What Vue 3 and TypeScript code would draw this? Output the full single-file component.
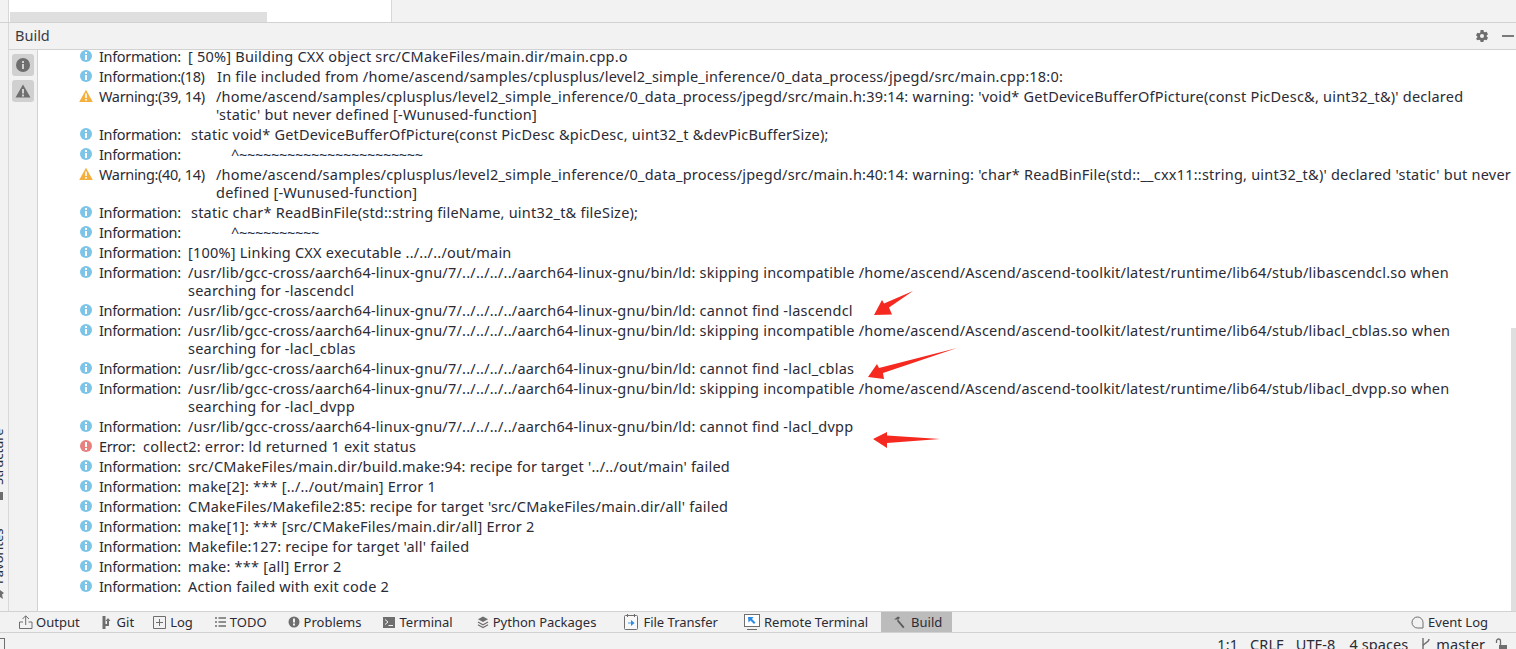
<script setup lang="ts">
type Kind = 'info' | 'warn' | 'err'
interface Row { kind: Kind; label: string; lines: string[]; cls?: string }
const I = 'Information:'
const rows: Row[] = [
  { kind: 'info', label: I, lines: ['[ 50%] Building CXX object src/CMakeFiles/main.dir/main.cpp.o'] },
  { kind: 'info', label: 'Information:(18)', cls: 'pos', lines: ['In file included from /home/ascend/samples/cplusplus/level2_simple_inference/0_data_process/jpegd/src/main.cpp:18:0:'] },
  { kind: 'warn', label: 'Warning:(39, 14)', cls: 'pos', lines: ["/home/ascend/samples/cplusplus/level2_simple_inference/0_data_process/jpegd/src/main.h:39:14: warning: 'void* GetDeviceBufferOfPicture(const PicDesc&, uint32_t&)' declared", "'static' but never defined [-Wunused-function]"] },
  { kind: 'info', label: I, cls: 'ind', lines: ['static void* GetDeviceBufferOfPicture(const PicDesc &picDesc, uint32_t &devPicBufferSize);'] },
  { kind: 'info', label: I, cls: 'ind2', lines: ['^~~~~~~~~~~~~~~~~~~~~~~~'] },
  { kind: 'warn', label: 'Warning:(40, 14)', cls: 'pos', lines: ["/home/ascend/samples/cplusplus/level2_simple_inference/0_data_process/jpegd/src/main.h:40:14: warning: 'char* ReadBinFile(std::__cxx11::string, uint32_t&)' declared 'static' but never", 'defined [-Wunused-function]'] },
  { kind: 'info', label: I, cls: 'ind', lines: ['static char* ReadBinFile(std::string fileName, uint32_t& fileSize);'] },
  { kind: 'info', label: I, cls: 'ind2', lines: ['^~~~~~~~~~~'] },
  { kind: 'info', label: I, lines: ['[100%] Linking CXX executable ../../../out/main'] },
  { kind: 'info', label: I, lines: ['/usr/lib/gcc-cross/aarch64-linux-gnu/7/../../../../aarch64-linux-gnu/bin/ld: skipping incompatible /home/ascend/Ascend/ascend-toolkit/latest/runtime/lib64/stub/libascendcl.so when', 'searching for -lascendcl'] },
  { kind: 'info', label: I, lines: ['/usr/lib/gcc-cross/aarch64-linux-gnu/7/../../../../aarch64-linux-gnu/bin/ld: cannot find -lascendcl'] },
  { kind: 'info', label: I, lines: ['/usr/lib/gcc-cross/aarch64-linux-gnu/7/../../../../aarch64-linux-gnu/bin/ld: skipping incompatible /home/ascend/Ascend/ascend-toolkit/latest/runtime/lib64/stub/libacl_cblas.so when', 'searching for -lacl_cblas'] },
  { kind: 'info', label: I, lines: ['/usr/lib/gcc-cross/aarch64-linux-gnu/7/../../../../aarch64-linux-gnu/bin/ld: cannot find -lacl_cblas'] },
  { kind: 'info', label: I, lines: ['/usr/lib/gcc-cross/aarch64-linux-gnu/7/../../../../aarch64-linux-gnu/bin/ld: skipping incompatible /home/ascend/Ascend/ascend-toolkit/latest/runtime/lib64/stub/libacl_dvpp.so when', 'searching for -lacl_dvpp'] },
  { kind: 'info', label: I, lines: ['/usr/lib/gcc-cross/aarch64-linux-gnu/7/../../../../aarch64-linux-gnu/bin/ld: cannot find -lacl_dvpp'] },
  { kind: 'err', label: 'Error:', lines: ['collect2: error: ld returned 1 exit status'] },
  { kind: 'info', label: I, lines: ["src/CMakeFiles/main.dir/build.make:94: recipe for target '../../out/main' failed"] },
  { kind: 'info', label: I, lines: ['make[2]: *** [../../out/main] Error 1'] },
  { kind: 'info', label: I, lines: ["CMakeFiles/Makefile2:85: recipe for target 'src/CMakeFiles/main.dir/all' failed"] },
  { kind: 'info', label: I, lines: ['make[1]: *** [src/CMakeFiles/main.dir/all] Error 2'] },
  { kind: 'info', label: I, lines: ["Makefile:127: recipe for target 'all' failed"] },
  { kind: 'info', label: I, lines: ['make: *** [all] Error 2'] },
  { kind: 'info', label: I, lines: ['Action failed with exit code 2'] },
]
const tabs = ['Output', 'Git', 'Log', 'TODO', 'Problems', 'Terminal', 'Python Packages', 'File Transfer', 'Remote Terminal', 'Build']
</script>

<template>
  <div class="ide">
    <div class="top">
      <div class="editor"><div class="hscroll"></div></div>
    </div>
    <div class="mid">
      <aside class="rail">
        <div class="vlabel s">Structure</div>
        <span class="ricon sq"></span>
        <div class="vlabel f">Favorites</div>
        <svg class="ricon star" width="4" height="9" viewBox="0 0 4 9"><path d="M0 0 4 3 2 4.500 3 9 0 7z" fill="#6e6e6e"/></svg>
      </aside>
      <div class="panel">
        <header class="phead">
          <span class="ptitle">Build</span>
          <span class="pactions">
            <svg width="14" height="14" viewBox="0 0 14 14"><path fill="#6e6e6e" fill-rule="evenodd" d="M5.6 1h2.8l.4 1.7 1.1.6 1.7-.5 1.4 2.4-1.3 1.2v1.2l1.3 1.2-1.4 2.4-1.7-.5-1.1.6-.4 1.7H5.6l-.4-1.7-1.1-.6-1.7.5L1 9.800l1.3-1.2V7.400L1 6.200l1.400-2.400 1.700.5 1.100-.6zM7 5a2 2 0 1 0 0 4 2 2 0 0 0 0-4z"/></svg>
            <span class="minus"></span>
          </span>
        </header>
        <div class="pbody">
          <div class="filters">
            <button class="fbtn">
              <svg width="16" height="16" viewBox="0 0 16 16"><circle cx="8" cy="8" r="7" fill="#6e6e6e"/><rect x="7" y="7" width="2" height="5" fill="#d0d0d0"/><rect x="7" y="4" width="2" height="2" fill="#d0d0d0"/></svg>
            </button>
            <button class="fbtn">
              <svg width="16" height="16" viewBox="0 0 16 16"><path d="M8 1.500 15.500 14.500H.5z" fill="#6e6e6e"/><rect x="7" y="6" width="2" height="4.500" fill="#d0d0d0"/><rect x="7" y="11.500" width="2" height="2" fill="#d0d0d0"/></svg>
            </button>
          </div>
          <div class="log">
            <div v-for="(r, i) in rows" :key="i" class="row">
              <svg v-if="r.kind === 'warn'" class="ico" width="14" height="14" viewBox="0 0 14 14"><path d="M7 .8 13.800 13H.2z" fill="#f4af3d"/><rect x="6.200" y="4.500" width="1.600" height="4.500" fill="#fff"/><rect x="6.200" y="10" width="1.600" height="1.700" fill="#fff"/></svg>
              <svg v-else class="ico" width="14" height="14" viewBox="0 0 14 14"><circle cx="7" cy="7" r="6" :fill="r.kind === 'err' ? '#e88080' : '#7cc4e8'"/><template v-if="r.kind === 'info'"><rect x="6" y="6" width="2" height="5" fill="#fff"/><rect x="6" y="3" width="2" height="2" fill="#fff"/></template><template v-else><rect x="6" y="3" width="2" height="5" fill="#fff"/><rect x="6" y="9" width="2" height="2" fill="#fff"/></template></svg>
              <span class="label" :class="[r.kind, r.cls]">{{ r.label }}</span>
              <div class="msg" :class="r.cls">
                <div v-for="(l, j) in r.lines" :key="j" class="line">{{ l }}</div>
              </div>
            </div>
          </div>
          <div class="vscroll"></div>
          <svg class="arrows" width="1516" height="649" viewBox="0 0 1516 649">
            <path d="M874 315 L882 300 L884 303.500 L913 291 L889 307.500 L892 314.500Z" fill="#f5291f"/>
            <path d="M868 377 L877 364 L879 368 L957 348 L883 373 L884 379Z" fill="#f5291f"/>
            <path d="M873 439 L887 432 L887 435.500 L940 439 L887 443 L887 448Z" fill="#f5291f"/>
          </svg>
        </div>
      </div>
    </div>
    <div class="tabs">
      <div class="tablist">
        <div v-for="(t, i) in tabs" :key="t" class="tab" :class="'t' + i">
          <svg v-if="i === 0" width="14" height="14" viewBox="0 0 14 14"><path d="M.5 7v6.500h12.500V7H9.500M4 7H.5M6.700 10V1M3.500 4l3.200-3.200L10 4" fill="none" stroke="#6e6e6e" stroke-width="1"/></svg>
          <svg v-else-if="i === 1" width="11" height="13" viewBox="0 0 11 13"><path d="M2 0v13" stroke="#6e6e6e" stroke-width="3"/><path d="M3 9 H6 V4" fill="none" stroke="#6e6e6e" stroke-width="2"/><path d="M3.500 5 6 2l2.500 3z" fill="#6e6e6e"/></svg>
          <svg v-else-if="i === 2" width="13" height="13" viewBox="0 0 13 13"><path d="M.5.500h12v12H.5zM6.500 3v7M3 6.500h7" fill="none" stroke="#6e6e6e"/></svg>
          <svg v-else-if="i === 3" width="11" height="10" viewBox="0 0 11 10"><path d="M0 1h2M3.500 1H11M0 5h2M3.500 5H11M0 9h2M3.500 9H11" stroke="#6e6e6e" stroke-width="1.500"/></svg>
          <svg v-else-if="i === 4" width="12" height="12" viewBox="0 0 12 12"><circle cx="6" cy="6" r="5.500" fill="#6e6e6e"/><rect x="5" y="2.500" width="2" height="4" fill="#f2f2f2"/><rect x="5" y="7.500" width="2" height="2" fill="#f2f2f2"/></svg>
          <svg v-else-if="i === 5" width="12" height="11" viewBox="0 0 12 11"><rect width="12" height="11" fill="#6e6e6e"/><path d="M2 2.500 5 5 2 7.500M5.500 8.500H10" fill="none" stroke="#f2f2f2"/></svg>
          <svg v-else-if="i === 6" width="12" height="14" viewBox="0 0 13 14"><path d="M6.500 1 12 4 6.500 7 1 4z" fill="#6e6e6e"/><path d="M1 7l5.500 3L12 7M1 10l5.500 3L12 10" fill="none" stroke="#6e6e6e" stroke-width="1.300"/></svg>
          <svg v-else-if="i === 7" width="14" height="16" viewBox="0 0 14 16"><rect x=".5" y="1.500" width="13" height="14" rx="1" fill="#f8f8f8" stroke="#6e6e6e"/><path d="M3.500 0v3M10.500 0v3" stroke="#6e6e6e"/><path d="M4 9h3" stroke="#4b9be8"/><path d="M7 6l3.500 3L7 12z" fill="#2b8be8"/></svg>
          <svg v-else-if="i === 8" width="16" height="16" viewBox="0 0 16 16"><rect x=".5" y=".5" width="15" height="12" fill="#fff" stroke="#6e6e6e"/><path d="M3 15.500h10" stroke="#6e6e6e"/><path d="M4 3h5.500L8 5l3.500 3.500-1.500 1.500L6.500 6.500 4.500 8.500z" fill="#2b8be8"/></svg>
          <svg v-else width="14" height="14" viewBox="0 0 14 14"><path d="M1 4.500 5 1.500l2 1L5.500 4.500zM5 4.500l6.500 7.500-1.500 1.200L4 6z" fill="#5c5c5c"/></svg>
          <span>{{ t }}</span>
        </div>
      </div>
      <div class="eventlog">
        <svg width="13" height="13" viewBox="0 0 13 13"><path d="M12 12H6.500A5.500 5.500 0 1 1 12 6.500z" fill="none" stroke="#6e6e6e"/></svg>
        <span>Event Log</span>
      </div>
    </div>
    <footer class="status">
      <span class="corner"></span>
      <span>1:1</span><span>CRLF</span><span>UTF-8</span><span class="indent">4 spaces</span>
      <span class="branch"><svg width="11" height="14" viewBox="0 0 11 14"><path d="M3 1v12M3 9C3 6 9 6 9 2" fill="none" stroke="#6e6e6e" stroke-width="1.400"/></svg>master</span>
      <svg class="lock" width="13" height="14" viewBox="0 0 13 14"><path d="M1.500 5V3A2 2 0 0 1 5.500 3V7" fill="none" stroke="#6e6e6e" stroke-width="1.300"/><rect x="4" y="7" width="8" height="7" fill="#6e6e6e"/></svg>
    </footer>
  </div>
</template>

<style scoped>
.ide {
  width: 1516px;
  height: 649px;
  overflow: hidden;
  display: flex;
  flex-direction: column;
  background: #f2f2f2;
  font-family: "Noto Sans", "Open Sans", sans-serif;
  font-size: 13px;
  color: #2b2b35;
  position: relative;
}
.top {
  height: 23px;
  flex: none;
  background: #f2f2f2;
  border-bottom: 1px solid #d2d2d2;
  box-sizing: border-box;
  padding-left: 8px;
}
.editor {
  width: 384px;
  height: 22px;
  background: #fff;
  border-left: 1px solid #d8d8d8;
  border-right: 1px solid #d8d8d8;
  box-sizing: border-box;
  padding: 12px 0 0 1px;
}
.hscroll { width: 257px; height: 10px; background: #dfdfdf; }
.mid { flex: 1; display: flex; min-height: 0; }
.rail {
  width: 9px;
  flex: none;
  overflow: hidden;
  background: #f2f2f2;
  border-right: 1px solid #d8d8d8;
  box-sizing: border-box;
  display: flex;
  flex-direction: column;
  align-items: flex-start;
  padding-top: 405px;
}
.vlabel {
  writing-mode: vertical-rl;
  transform: rotate(180deg);
  font-size: 13px;
  line-height: 16px;
  height: 57px;
  flex: none;
  white-space: nowrap;
  margin-left: -10px;
}
.ricon { flex: none; display: block; }
.sq { width: 3px; height: 8px; background: #6e6e6e; margin: 7px 0 27px; }
.star { margin-top: 6px; }
.panel { flex: 1; display: flex; flex-direction: column; min-width: 0; }
.phead {
  height: 27px;
  flex: none;
  box-sizing: border-box;
  border-bottom: 1px solid #d2d2d2;
  display: flex;
  align-items: center;
  justify-content: space-between;
  padding: 0 2px 3px 6px;
}
.ptitle { font-size: 14.500px; color: #3a3a44; }
.pactions { display: flex; align-items: center; gap: 13px; padding-top: 3px; }
.minus { width: 12px; height: 2px; background: #7a7a7a; display: block; }
.pbody {
  flex: 1;
  display: flex;
  background: #fff;
  min-height: 0;
  overflow: hidden;
}
.filters {
  width: 29px;
  flex: none;
  background: #f2f2f2;
  border-right: 1px solid #d2d2d2;
  box-sizing: border-box;
  display: flex;
  flex-direction: column;
  align-items: center;
  gap: 4px;
  padding-top: 4px;
}
.fbtn {
  width: 22px;
  height: 22px;
  padding: 0;
  border: 0;
  border-radius: 3px;
  background: #d0d0d0;
  display: flex;
  align-items: center;
  justify-content: center;
}
.log {
  flex: 1;
  min-width: 0;
  padding-left: 41px;
  margin-top: -3px;
  display: flex;
  flex-direction: column;
  gap: 2px;
  font-size: 14.500px;
  line-height: 18px;
  letter-spacing: 0.22px;
}
.row { display: flex; align-items: flex-start; }
.ico { flex: none; margin: 2px 6px 0 0; }
.label { flex: none; white-space: pre; width: 89px; letter-spacing: -0.35px; }
.label.warn { width: 117px; }
.label.info.pos { width: 118px; }
.label.err { width: 44px; }
.msg { white-space: pre; }
.msg.ind { padding-left: 3px; }
.msg.ind2 { padding-left: 43px; letter-spacing: -0.3px; }
.vscroll {
  position: absolute;
  right: 0;
  top: 328px;
  bottom: 38px;
  width: 5px;
  background: #dfdfdf;
}
.arrows { position: absolute; left: 0; top: 0; pointer-events: none; }
.tabs {
  height: 22px;
  flex: none;
  box-sizing: border-box;
  border-top: 1px solid #d2d2d2;
  border-bottom: 1px solid #d2d2d2;
  display: flex;
  justify-content: space-between;
  font-size: 13px;
}
.tablist { display: flex; padding-left: 19px; }
.tab { display: flex; align-items: center; gap: 4px; white-space: nowrap; }
.t0 { gap: 3px; margin-right: 22px; }
.t1 { margin-right: 19px; }
.t2 { margin-right: 22px; }
.t3 { margin-right: 21px; }
.t4 { margin-right: 22px; }
.t5 { margin-right: 24px; }
.t6 { margin-right: 28px; }
.t7 { gap: 5px; margin-right: 26px; }
.t8 { margin-right: 13px; }
.t9 { background: #bcbcbc; padding: 0 10px 0 12px; }
.eventlog { display: flex; align-items: center; gap: 4px; padding-right: 28px; }
.status {
  flex: none;
  height: 16px;
  display: flex;
  align-items: flex-start;
  gap: 12px;
  padding-right: 8px;
  font-size: 14.500px;
  line-height: 22px;
  letter-spacing: 0.1px;
  overflow: hidden;
}
.corner {
  width: 4px;
  height: 11px;
  margin-top: 5px;
  margin-right: auto;
  border: 1px solid #6e6e6e;
  border-left: 0;
  flex: none;
}
.indent { margin-left: 2px; }
.branch { display: flex; align-items: center; gap: 5px; }
.lock { margin-top: 5px; margin-left: -2px; }
</style>

<style>
html, body { margin: 0; padding: 0; overflow: hidden; }
</style>
